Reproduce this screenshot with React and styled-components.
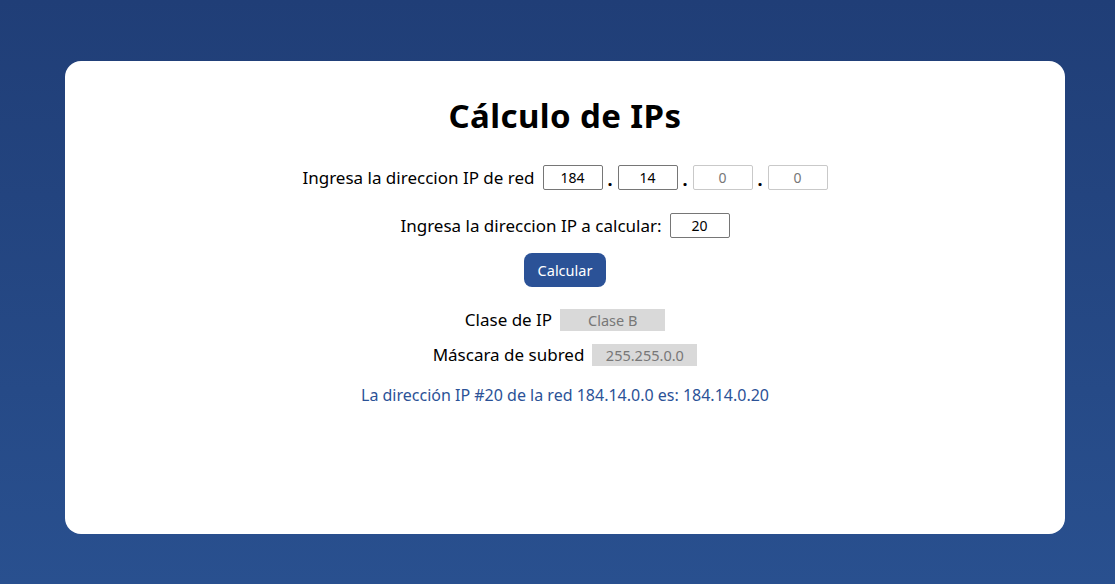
import React, { useState } from "react";
import styled, { createGlobalStyle } from "styled-components";

const GlobalStyle = createGlobalStyle`
  html, body {
    margin: 0;
    padding: 0;
  }
  body {
    min-height: 584px;
    background: linear-gradient(to bottom, #203e77, #29508f);
    font-family: "Noto Sans", "Liberation Sans", sans-serif;
    color: #000;
  }
`;

export default function App() {
  const [octets] = useState(["184", "14", "0", "0"]);
  const [hostNumber] = useState("20");

  return (
    <>
      <GlobalStyle />
      <Page>
        <Card>
          <Title>Cálculo de IPs</Title>

          <Row $top={28}>
            <Label>Ingresa la direccion IP de red</Label>
            <Octets>
              {octets.map((o, i) => (
                <React.Fragment key={i}>
                  {i > 0 && <Dot>.</Dot>}
                  <NumberInput value={o} disabled={i > 1} readOnly />
                </React.Fragment>
              ))}
            </Octets>
          </Row>

          <Row $top={21}>
            <Label>Ingresa la direccion IP a calcular:</Label>
            <NumberInput value={hostNumber} readOnly />
          </Row>

          <Button $top={15}>Calcular</Button>

          <Row $top={21}>
            <Label>Clase de IP</Label>
            <ResultBox>Clase B</ResultBox>
          </Row>

          <Row $top={11}>
            <Label>Máscara de subred</Label>
            <ResultBox>255.255.0.0</ResultBox>
          </Row>

          <Message>
            La dirección IP #20 de la red 184.14.0.0 es: 184.14.0.20
          </Message>
        </Card>
      </Page>
    </>
  );
}

const Page = styled.div`
  padding: 61px 0 0 15px;
  display: flex;
  justify-content: center;
`;

const Card = styled.div`
  width: 1000px;
  height: 473px;
  box-sizing: border-box;
  background: #fff;
  border-radius: 16px;
  padding-top: 36px;
  display: flex;
  flex-direction: column;
  align-items: center;
`;

const Title = styled.h1`
  margin: 0;
  font-size: 33px;
  line-height: 38px;
  font-weight: 700;
  letter-spacing: 0.4px;
`;

const Row = styled.div`
  margin-top: ${(p) => p.$top}px;
  display: flex;
  align-items: center;
  gap: 8px;
`;

const Label = styled.span`
  font-size: 17px;
  line-height: 24px;
`;

const Octets = styled.div`
  display: flex;
  align-items: center;
`;

const Dot = styled.span`
  width: 15px;
  text-align: center;
  font-size: 18px;
  font-weight: 700;
  line-height: 25px;
  padding-top: 4px;
`;

const NumberInput = styled.input`
  width: 60px;
  height: 25px;
  box-sizing: border-box;
  border: 1px solid #767676;
  border-radius: 2px;
  background: #fff;
  text-align: center;
  font-family: "Noto Sans", "Liberation Sans", sans-serif;
  font-size: 14px;
  color: #000;
  padding: 0;
  outline: none;

  &:disabled {
    border-color: #c9c9c9;
    color: #777;
  }
`;

const Button = styled.button`
  margin-top: ${(p) => p.$top}px;
  width: 82px;
  height: 34px;
  border: none;
  border-radius: 8px;
  background: #2b5297;
  color: #fff;
  font-family: "Noto Sans", "Liberation Sans", sans-serif;
  font-size: 14.5px;
  cursor: pointer;
`;

const ResultBox = styled.div`
  width: 105px;
  height: 22px;
  background: #d9d9d9;
  color: #777;
  font-size: 14.5px;
  line-height: 22px;
  text-align: center;
`;

const Message = styled.p`
  margin: 16px 0 0;
  font-size: 16px;
  line-height: 24px;
  color: #2b5297;
`;
